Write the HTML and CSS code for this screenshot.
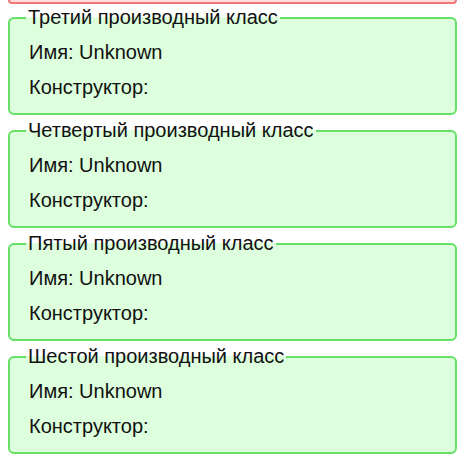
FILE: index.html
```html
<!DOCTYPE html>
<html lang="ru">
<head>
<meta charset="utf-8">
<link rel="stylesheet" href="styles.css">
</head>
<body>
<div class="prev"></div>
<fieldset class="cls">
  <legend>Третий производный класс</legend>
  <div class="row">Имя: Unknown</div>
  <div class="row">Конструктор:</div>
</fieldset>
<fieldset class="cls">
  <legend>Четвертый производный класс</legend>
  <div class="row">Имя: Unknown</div>
  <div class="row">Конструктор:</div>
</fieldset>
<fieldset class="cls">
  <legend>Пятый производный класс</legend>
  <div class="row">Имя: Unknown</div>
  <div class="row">Конструктор:</div>
</fieldset>
<fieldset class="cls">
  <legend>Шестой производный класс</legend>
  <div class="row">Имя: Unknown</div>
  <div class="row">Конструктор:</div>
</fieldset>
</body>
</html>
```
FILE: styles.css
```css
html, body {
  margin: 0;
  padding: 0;
  background: #ffffff;
}
body {
  font-family: "Liberation Sans", Arial, sans-serif;
  font-size: 20px;
  line-height: 23px;
  color: #111;
  padding: 0 10px 0 8px;
}
.prev {
  height: 2px;
  background: #ffdddd;
  border: 2px solid #ee7777;
  border-top: none;
  border-radius: 0 0 6px 6px;
  margin-bottom: 2px;
}
.cls {
  margin: 0 0 4px 0;
  border: 2px solid #66e066;
  border-radius: 6px;
  background: #ddffdd;
  padding: 0 16px 14px 16px;
}
.cls legend {
  padding: 0 2px;
}
.row {
  margin-top: 12px;
  padding-left: 3px;
}
```
